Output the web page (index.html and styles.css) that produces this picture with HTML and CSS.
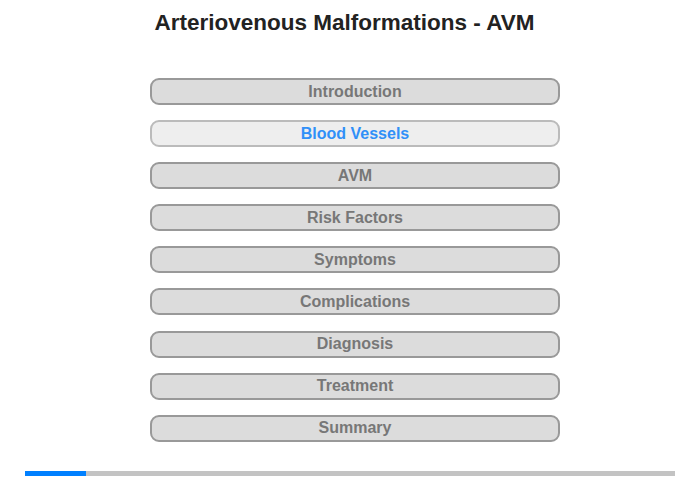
FILE: index.html
```html
<!DOCTYPE html>
<html lang="en">
<head>
    <meta charset="UTF-8">
    <meta name="viewport" content="width=device-width, initial-scale=1.0">
    <title>Arteriovenous Malformations - AVM</title>
    <link rel="stylesheet" href="styles.css">
</head>
<body>
    <h1 class="title">Arteriovenous Malformations - AVM</h1>

    <div class="menu">
        <button class="menu-item">Introduction</button>
        <button class="menu-item active">Blood Vessels</button>
        <button class="menu-item">AVM</button>
        <button class="menu-item">Risk Factors</button>
        <button class="menu-item">Symptoms</button>
        <button class="menu-item">Complications</button>
        <button class="menu-item">Diagnosis</button>
        <button class="menu-item">Treatment</button>
        <button class="menu-item">Summary</button>
    </div>

    <div class="progress">
        <div class="progress-fill" style="width: 9.4%"></div>
    </div>
</body>
</html>
```

FILE: styles.css
```css
body {
    font-family: "Liberation Sans", Arial, sans-serif;
    margin: 0;
    background: #fff;
}
.title {
    font-size: 22.5px;
    line-height: 26px;
    font-weight: bold;
    color: #222;
    text-align: center;
    margin: 10px 0 0;
    padding-right: 11px;
}
.menu {
    display: flex;
    flex-direction: column;
    align-items: center;
    gap: 15.1px;
    margin-top: 42px;
    padding-left: 10px;
}
.menu-item {
    width: 410px;
    height: 27px;
    padding: 0;
    background: #dcdcdc;
    border: 2px solid #999;
    border-radius: 9px;
    font-family: inherit;
    font-size: 16px;
    font-weight: bold;
    color: #777;
    cursor: pointer;
}
.menu-item.active {
    background: #eee;
    border-color: #bbb;
    color: #3090f8;
}
.progress {
    margin: 29px 25px 0;
    height: 5px;
    background: #c3c3c3;
}
.progress-fill {
    height: 100%;
    background: #0080ff;
}
```
